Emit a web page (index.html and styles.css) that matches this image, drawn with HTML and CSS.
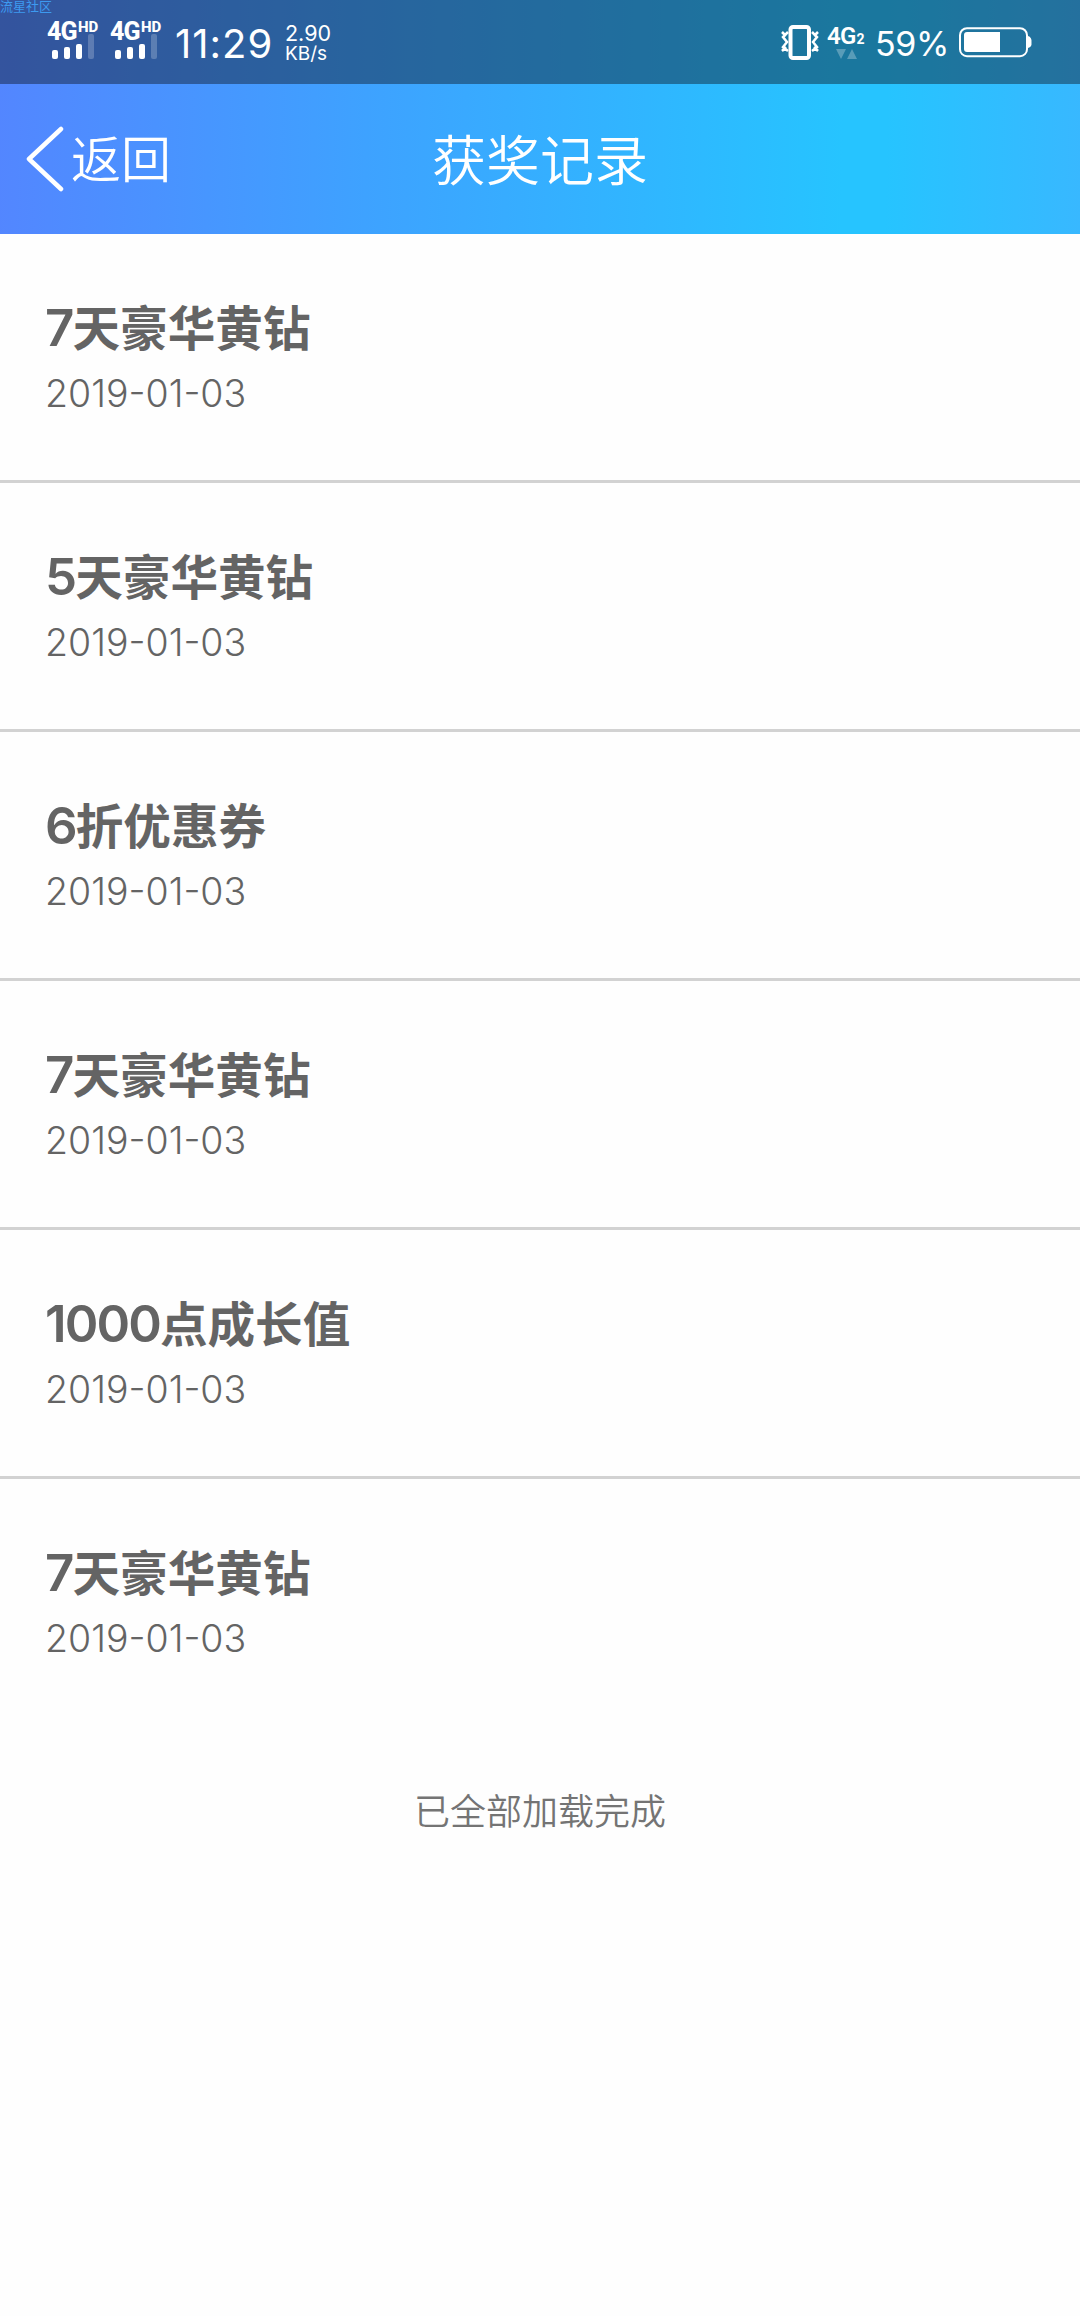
FILE: index.html
```html
<!DOCTYPE html>
<html lang="zh-CN">
<head>
<meta charset="utf-8">
<title>获奖记录</title>
<link rel="stylesheet" href="styles.css">
</head>
<body>
<header class="top">
  <div class="status">
    <span class="watermark">流星社区</span>
    <div class="sim">
      <div class="net"><span class="g">4G</span><span class="hd">HD</span></div>
      <svg class="bars" width="44" height="26" viewBox="0 0 44 26"><g fill="#fff"><rect x="0" y="16" width="6" height="9" rx="2"/><rect x="12" y="13" width="6" height="12" rx="2"/><rect x="24" y="10" width="6" height="15" rx="2"/><rect x="36" y="0" width="6" height="25" rx="2" opacity=".22"/></g></svg>
    </div>
    <div class="sim">
      <div class="net"><span class="g">4G</span><span class="hd">HD</span></div>
      <svg class="bars" width="44" height="26" viewBox="0 0 44 26"><g fill="#fff"><rect x="0" y="16" width="6" height="9" rx="2"/><rect x="12" y="13" width="6" height="12" rx="2"/><rect x="24" y="10" width="6" height="15" rx="2"/><rect x="36" y="0" width="6" height="25" rx="2" opacity=".22"/></g></svg>
    </div>
    <span class="clock">11:29</span>
    <div class="speed"><span>2.90</span><span>KB/s</span></div>
    <svg class="vibrate" width="40" height="38" viewBox="0 0 40 38" fill="none" stroke="#fff"><rect x="10.5" y="3" width="18.500" height="31" rx="2.500" stroke-width="4"/><path d="M8 8L3 13L7 18L3 23L8 27M2 8L6 12M2 27L6 23M32 8L37 13L33 18L37 23L32 27M38 8L34 12M38 27L34 23" stroke-width="2.500"/></svg>
    <div class="data">
      <div class="data-label"><span>4G</span><span class="two">2</span></div>
      <svg class="arrows" width="21" height="11" viewBox="0 0 21 11" fill="#fff" opacity=".27"><path d="M0 0H10L5 10ZM11 10H21L16 0Z"/></svg>
    </div>
    <span class="percent">59%</span>
    <svg class="battery" width="74" height="32" viewBox="0 0 74 32"><rect x="1" y="1.200" width="67" height="28" rx="7" fill="none" stroke="#fff" stroke-width="2"/><rect x="5" y="5" width="36" height="20" rx="3" fill="#fff"/><rect x="37" y="5" width="4" height="20" fill="#fff"/><path d="M69 9Q73 10 72.500 15.500Q73 20 69 21Z" fill="#fff"/></svg>
  </div>
  <nav class="nav">
    <svg class="chevron" width="38" height="66" viewBox="0 0 38 66" fill="none" stroke="#fff" stroke-width="4.500" stroke-linecap="round" stroke-linejoin="round"><path d="M35 3L3 33L35 63"/></svg>
    <span class="back">返回</span>
    <h1 class="title">获奖记录</h1>
  </nav>
</header>
<main>
  <ul class="list">
    <li class="item"><h2 class="prize"><span class="num">7</span>天豪华黄钻</h2><time class="date">2019-01-03</time></li>
    <li class="item"><h2 class="prize"><span class="num">5</span>天豪华黄钻</h2><time class="date">2019-01-03</time></li>
    <li class="item"><h2 class="prize"><span class="num">6</span>折优惠券</h2><time class="date">2019-01-03</time></li>
    <li class="item"><h2 class="prize"><span class="num">7</span>天豪华黄钻</h2><time class="date">2019-01-03</time></li>
    <li class="item"><h2 class="prize"><span class="num">1000</span>点成长值</h2><time class="date">2019-01-03</time></li>
    <li class="item"><h2 class="prize"><span class="num">7</span>天豪华黄钻</h2><time class="date">2019-01-03</time></li>
  </ul>
  <p class="end">已全部加载完成</p>
</main>
</body>
</html>
```
FILE: styles.css
```css
* { box-sizing: border-box; }
body {
  margin: 0;
  min-height: 2316px;
  background: #fefefe;
  color: #646464;
  font-family: Inter, "Noto Sans CJK SC", sans-serif;
}
.top {
  color: #fff;
  background: linear-gradient(91deg, #5386ff 0%, #3ea2ff 34%, #26c4ff 78%, #26c4ff 82%, #38b8ff 100%);
}
.status {
  position: relative;
  display: flex;
  align-items: flex-start;
  height: 84px;
  padding-left: 47px;
  background: rgba(12, 18, 30, .43);
  white-space: nowrap;
}
.watermark {
  position: absolute;
  left: 0;
  top: 0;
  font-size: 13px;
  line-height: 13px;
  color: #3d9af0;
}
.sim { width: 52px; height: 60px; margin: 22px 11px 0 0; }
.net { display: flex; height: 12px; line-height: 20px; font-family: Roboto, sans-serif; font-weight: 800; }
.g { width: 31px; font-size: 25px; letter-spacing: -.8px; }
.hd { font-size: 15px; line-height: 11px; }
.bars { display: block; margin-left: 5px; }
.clock { width: 110px; margin: 22px 0 0 2px; font-size: 40px; line-height: 44px; letter-spacing: 1px; }
.speed { display: flex; flex-direction: column; margin-top: 23px; font-size: 21.500px; line-height: 20.500px; }
.speed span:last-child { font-size: 19px; }
.vibrate { margin: 24px 7px 0 auto; }
.data { width: 48px; margin-top: 25px; }
.data-label { display: flex; align-items: baseline; height: 24px; font-family: Roboto, sans-serif; font-size: 24px; line-height: 23px; font-weight: 600; letter-spacing: -.8px; }
.two { margin-left: 1px; font-size: 14px; line-height: 14px; font-weight: 700; }
.arrows { display: block; margin-left: 9px; }
.percent { width: 84px; margin-top: 22px; font-size: 34px; line-height: 44px; letter-spacing: -.4px; }
.battery { margin: 27px 47px 0 0; }
.nav {
  position: relative;
  display: flex;
  align-items: center;
  height: 150px;
  padding-left: 26px;
  font-weight: 350;
}
.chevron { flex: none; }
.back { margin-left: 7px; padding-top: 2px; font-size: 50px; line-height: 70px; }
.title {
  position: absolute;
  inset: 0;
  margin: 0;
  text-align: center;
  font-size: 54px;
  font-weight: 350;
  line-height: 155px;
}
.list { margin: 0; padding: 0; list-style: none; }
.item {
  height: 249px;
  padding: 59px 45px 0;
  border-bottom: 3px solid #d2d2d2;
}
.item:last-child { border-bottom-color: transparent; }
.prize { margin: 0; font-size: 47.600px; font-weight: 700; line-height: 70px; }
.num { font-size: 51px; font-weight: 600; letter-spacing: -1.900px; }
.date { display: block; font-size: 37.500px; font-weight: 300; line-height: 60px; }
.end {
  margin: 54px 0 0;
  text-align: center;
  font-size: 36px;
  font-weight: 350;
  line-height: 60px;
  color: #747474;
}
```
